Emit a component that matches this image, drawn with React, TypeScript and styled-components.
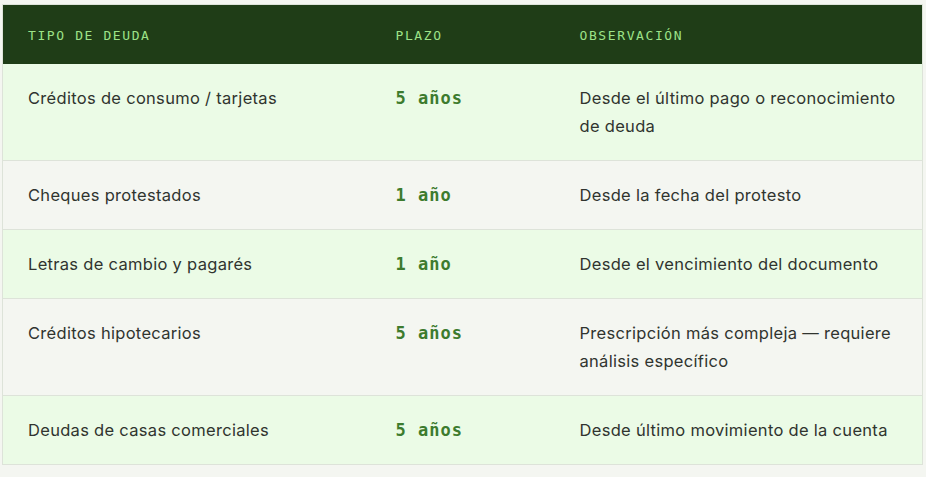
import { FC } from "react";
import styled, { createGlobalStyle } from "styled-components";

const GlobalStyle = createGlobalStyle`
  html, body {
    margin: 0;
    background: #f4f6f1;
  }
  *, *::before, *::after {
    box-sizing: border-box;
  }
`;

const Page = styled.div`
  padding: 4px 4px 12px 2px;
`;

const Table = styled.table`
  width: 920px;
  border-collapse: collapse;
  table-layout: fixed;
  border: 1px solid #dde3d9;
`;

const HeadCell = styled.th<{ $w: string }>`
  width: ${(p) => p.$w};
  background: #1f3d17;
  color: #9de288;
  text-align: left;
  font-family: "DejaVu Sans Mono", "Liberation Mono", monospace;
  font-size: 13px;
  font-weight: 400;
  letter-spacing: 1.6px;
  line-height: 19px;
  padding: 21px 25px 19px;
  border: none;
`;

const Row = styled.tr<{ $tint: boolean }>`
  background: ${(p) => (p.$tint ? "#ebfbe6" : "#f4f6f1")};
  border-bottom: 1px solid #dde3d9;
`;

const Cell = styled.td`
  vertical-align: top;
  padding: 20px 25px;
  font-family: Inter, "Noto Sans", sans-serif;
  font-size: 16.5px;
  letter-spacing: 0.3px;
  line-height: 28px;
  color: #30342f;
`;

const TermCell = styled(Cell)`
  font-family: "DejaVu Sans Mono", "Liberation Mono", monospace;
  font-size: 17px;
  font-weight: 700;
  letter-spacing: 1px;
  color: #3d7b2e;
  white-space: pre;
`;

interface IDebt {
  type: string;
  term: string;
  note: string;
}

const debts: IDebt[] = [
  { type: "Créditos de consumo / tarjetas", term: "5 años", note: "Desde el último pago o reconocimiento de deuda" },
  { type: "Cheques protestados", term: "1 año", note: "Desde la fecha del protesto" },
  { type: "Letras de cambio y pagarés", term: "1 año", note: "Desde el vencimiento del documento" },
  { type: "Créditos hipotecarios", term: "5 años", note: "Prescripción más compleja — requiere análisis específico" },
  { type: "Deudas de casas comerciales", term: "5 años", note: "Desde último movimiento de la cuenta" },
];

const App: FC = () => {
  return (
    <Page>
      <GlobalStyle />
      <Table>
        <thead>
          <tr>
            <HeadCell $w="368px">TIPO DE DEUDA</HeadCell>
            <HeadCell $w="184px">PLAZO</HeadCell>
            <HeadCell $w="368px">OBSERVACIÓN</HeadCell>
          </tr>
        </thead>
        <tbody>
          {debts.map((d, i) => (
            <Row key={d.type} $tint={i % 2 === 0}>
              <Cell>{d.type}</Cell>
              <TermCell>{d.term}</TermCell>
              <Cell>{d.note}</Cell>
            </Row>
          ))}
        </tbody>
      </Table>
    </Page>
  );
};

export default App;
